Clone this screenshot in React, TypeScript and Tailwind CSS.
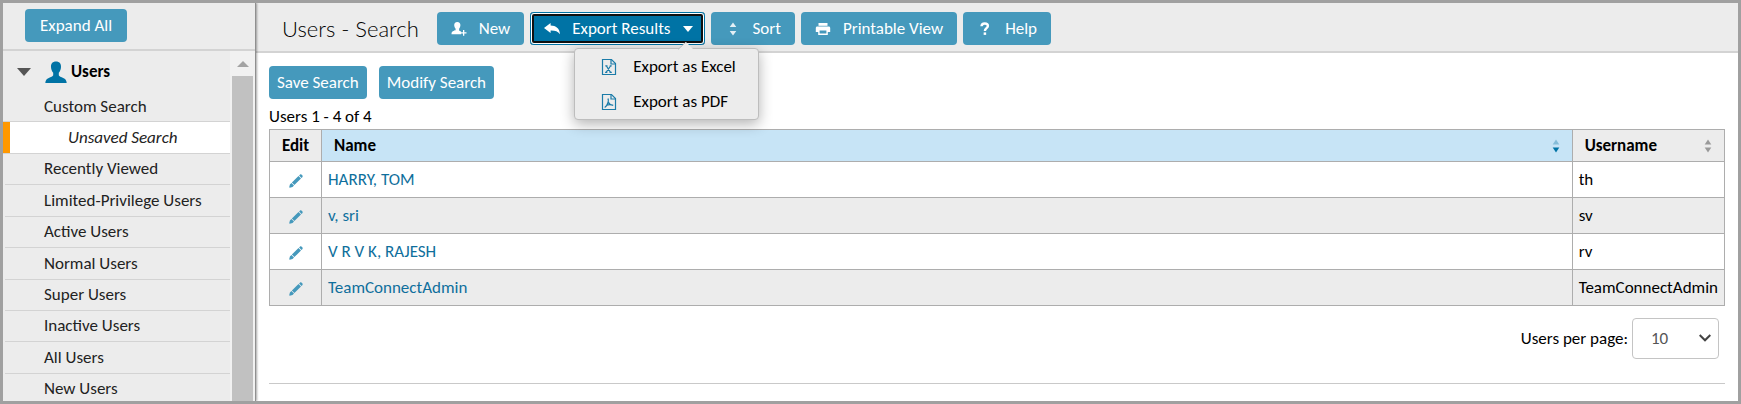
import { useState, type ReactNode } from 'react';

const SIDEBAR_VIEWS = [
  'Recently Viewed',
  'Limited-Privilege Users',
  'Active Users',
  'Normal Users',
  'Super Users',
  'Inactive Users',
  'All Users',
  'New Users',
];

const USERS = [
  { name: 'HARRY, TOM', username: 'th' },
  { name: 'v, sri', username: 'sv' },
  { name: 'V R V K, RAJESH', username: 'rv' },
  { name: 'TeamConnectAdmin', username: 'TeamConnectAdmin' },
];

function UserIcon() {
  return (
    <svg viewBox="0 0 22 22" className="h-[22px] w-[22px] fill-[#0073a5]">
      <path d="M11 0.5c3.4 0 5.2 2.2 5 5.4c-0.1 2.6-1 4.4-2.2 5.8v2.6c0.3 1.2 2.4 1.8 4.4 2.6c2.2 0.9 3.3 2.2 3.5 5.1H0.3c0.2-2.9 1.3-4.2 3.5-5.1c2-0.8 4.1-1.4 4.4-2.6v-2.6C7 10.3 6.1 8.5 6 5.9C5.8 2.7 7.6 0.5 11 0.5z" />
    </svg>
  );
}

function UserAddIcon() {
  return (
    <svg viewBox="0 0 16 16" className="h-4 w-4 fill-current">
      <path d="M6.3 1c2.1 0 3.2 1.4 3.1 3.3c-0.1 1.5-0.6 2.6-1.3 3.4v1.5c0.2 0.6 1 1 2 1.3v2.7H0.5c0-1.8 0.5-2.7 1.9-3.2c1.1-0.4 2.1-0.5 2.2-1.1V7.7C3.9 6.9 3.3 5.8 3.2 4.3C3.1 2.4 4.2 1 6.3 1z" />
      <path d="M12 9h1.3v2.2h2.2v1.3h-2.2v2.3H12v-2.3H9.8v-1.3H12z" />
    </svg>
  );
}

function ReplyIcon() {
  return (
    <svg viewBox="0 0 16 16" className="h-4 w-4 fill-current">
      <path d="M0 7L6.6 2v2.6c5.4 0.2 8.9 2.7 9.4 8.6c-2.2-3-4.8-3.9-9.4-3.8v2.7z" />
    </svg>
  );
}

function SortIcon() {
  return (
    <svg viewBox="0 0 16 16" className="h-4 w-4 fill-current opacity-85">
      <path d="M8 1.5L11.3 6h-6.6zM8 14.5L4.7 10h6.6z" />
    </svg>
  );
}

function PrinterIcon() {
  return (
    <svg viewBox="0 0 16 16" className="h-4 w-4 fill-current">
      <path d="M3.5 2h9v2.8h-9z" />
      <path
        fillRule="evenodd"
        d="M2.3 5.6h11.4c0.9 0 1.5 0.6 1.5 1.5v4h-2.4v2.9H3.2v-2.9H0.8v-4c0-0.9 0.6-1.5 1.5-1.5zM4.6 9.5v3.1h6.8V9.5z"
      />
    </svg>
  );
}

function HelpIcon() {
  return (
    <svg viewBox="0 0 16 16" className="h-4 w-4 fill-none stroke-current">
      <path d="M4.5 5.2C4.6 3.4 5.9 2.5 7.7 2.5c1.9 0 3.2 0.9 3.2 2.5c0 2.2-3 2.2-3 4.9" strokeWidth="2.4" />
      <path d="M7.9 11.4v2.5" strokeWidth="2.5" />
    </svg>
  );
}

function PencilIcon() {
  return (
    <svg viewBox="0 0 14 14" className="h-3.5 w-3.5 fill-[#4599bc]">
      <path d="M10.1 1.5l1-1c1.2-0.8 3.2 1.2 2.4 2.4l-1 1zM9.5 2l2.5 2.5L5.4 11.1L2.9 8.6zM2.4 9.1l2.6 2.5L3.5 13.1l-2.7 0.7l-0.6-0.6l0.7-2.6z" />
    </svg>
  );
}

function FileIcon({ children }: { children: ReactNode }) {
  return (
    <svg viewBox="0 0 16 18" className="h-[18px] w-4 fill-none stroke-[#1b7ba8]" strokeWidth="1.2">
      <path d="M1.5 1.5h9l4 4v11h-13z" />
      <path d="M10 1.5v4.5h4.5" />
      {children}
    </svg>
  );
}

function ColumnSort({ up, down }: { up: string; down: string }) {
  return (
    <svg viewBox="0 0 8 14" className="h-3.5 w-2">
      <path d="M4 0.5L7.3 5.5H0.7z" className={up} />
      <path d="M4 13.5L0.7 8.5h6.6z" className={down} />
    </svg>
  );
}

const buttonClass =
  'flex h-[33px] items-center rounded-sm bg-[#4599bc] text-[17px] text-white hover:bg-[#0073a5] cursor-pointer whitespace-nowrap';

function ToolbarButton({ icon, label }: { icon: ReactNode; label: string }) {
  return (
    <button type="button" className={`${buttonClass} gap-3 px-3.5`}>
      {icon}
      <span>{label}</span>
    </button>
  );
}

function Sidebar() {
  return (
    <aside className="relative z-10 flex w-[253px] shrink-0 flex-col border-r border-[#8f8f8f] bg-[#ececec] shadow-[1px_0_2px_rgba(0,0,0,0.35)]">
      <div className="border-b-2 border-[#d3d3d3] px-[22px] pt-1.5 pb-[7px]">
        <button type="button" className={`${buttonClass} px-[15px]`}>
          Expand All
        </button>
      </div>

      <div className="flex min-h-0 flex-1">
        <nav className="min-w-0 flex-1 overflow-hidden text-[17px] text-[#222]">
          <button type="button" className="flex h-[42px] w-full items-center pl-3.5 font-bold text-black">
            <svg viewBox="0 0 14 8" className="h-2 w-3.5 fill-[#555]">
              <path d="M0 0h14L7 8z" />
            </svg>
            <span className="ml-3.5">
              <UserIcon />
            </span>
            <span className="ml-1">Users</span>
          </button>
          <a href="#custom" className="flex h-7 items-center pl-[41px]">
            Custom Search
          </a>
          <a
            href="#unsaved"
            className="flex h-[33px] items-center border-y border-[#d3d3d3] bg-white bg-[linear-gradient(to_right,#ff9800_7px,transparent_7px)] pl-[65px] italic"
          >
            Unsaved Search
          </a>
          <div className="ml-0.5 grid h-[251px] auto-rows-fr">
            {SIDEBAR_VIEWS.map((view) => (
              <a key={view} href="#view" className="flex items-center border-b border-[#d3d3d3] pl-[39px]">
                {view}
              </a>
            ))}
          </div>
        </nav>

        {/* Scrollbar */}
        <div className="flex w-[25px] shrink-0 flex-col bg-[#f1f1f1] px-0.5">
          <div className="flex h-[25px] items-center justify-center">
            <svg viewBox="0 0 12 6" className="h-1.5 w-3 fill-[#a3a3a3]">
              <path d="M6 0l6 6H0z" />
            </svg>
          </div>
          <div className="flex-1 bg-[#c1c1c1]" />
        </div>
      </div>
    </aside>
  );
}

function ExportMenu() {
  const [open, setOpen] = useState(true);

  return (
    <div className="relative">
      <button
        type="button"
        aria-expanded={open}
        onClick={() => setOpen(!open)}
        className="flex h-[33px] cursor-pointer items-center gap-3 rounded-sm bg-[#0073a5] pr-3 pl-3.5 text-[17px] whitespace-nowrap text-white shadow-[inset_0_0_0_1px_#0073a5,inset_0_0_0_2px_#fff,inset_0_0_0_4px_#101010]"
      >
        <ReplyIcon />
        <span>Export Results</span>
        <svg viewBox="0 0 10 6" className="h-1.5 w-2.5 fill-current">
          <path d="M0 0h10L5 6z" />
        </svg>
      </button>

      {open && (
        <div className="absolute top-9 left-11 z-20 w-[185px] rounded border border-[#bdbdbd] bg-[#ececec] shadow-[0_4px_14px_rgba(0,0,0,0.3)]">
          <svg viewBox="0 0 16 8" className="absolute -top-[7px] right-16 h-2 w-4">
            <path d="M0 8L8 0l8 8z" className="fill-[#ececec]" />
            <path d="M0 7.5L8 0" className="stroke-[#bdbdbd]" />
          </svg>
          <button type="button" className="flex h-[35px] w-full items-center gap-4 pl-[26px] text-[17px] text-black">
            <FileIcon>
              <path d="M5.4 8l4 6.2M9.5 8l-4.2 6.2M4.3 7.9h2.2M8.7 7.9h2M4.1 14.3h2.2M8.5 14.3h2.3" />
            </FileIcon>
            Export as Excel
          </button>
          <button type="button" className="flex h-[35px] w-full items-center gap-4 pl-[26px] text-[17px] text-black">
            <FileIcon>
              <path d="M6.8 5.5c0.9 1 0.7 2.3 0.3 3.7c-0.6 2.2-1.8 4.4-3.4 5.3M7.2 9c0.8 1.8 2.6 3.1 5 3.4M5.6 12.2c2-0.7 4.4-0.7 6.6 0.1" />
            </FileIcon>
            Export as PDF
          </button>
        </div>
      )}
    </div>
  );
}

function UsersTable() {
  return (
    <table className="w-full border-collapse text-left text-[17px] leading-6 text-black">
      <thead>
        <tr className="h-8">
          <th className="w-[52px] border border-[#adadad] bg-[#ececec] text-center">Edit</th>
          <th className="border border-[#adadad] bg-[#c7e4f6] px-3">
            <div className="flex items-center justify-between">
              Name
              <ColumnSort up="fill-[#85bcd8]" down="fill-[#0073a5]" />
            </div>
          </th>
          <th className="w-[152px] border border-[#adadad] bg-[#ececec] px-3">
            <div className="flex items-center justify-between">
              Username
              <ColumnSort up="fill-[#999]" down="fill-[#999]" />
            </div>
          </th>
        </tr>
      </thead>
      <tbody>
        {USERS.map((user) => (
          <tr key={user.username} className="h-9 even:bg-[#ececec]">
            <td className="border border-[#adadad]">
              <a href="#edit" aria-label={`Edit ${user.name}`} className="flex justify-center pt-0.5">
                <PencilIcon />
              </a>
            </td>
            <td className="border border-[#adadad] px-1.5">
              <a href="#user" className="text-[#0f6f9c] hover:underline">
                {user.name}
              </a>
            </td>
            <td className="border border-[#adadad] px-1.5">{user.username}</td>
          </tr>
        ))}
      </tbody>
    </table>
  );
}

export default function App() {
  return (
    <div className="flex h-screen overflow-hidden border-[3px] border-[#a0a0a0] bg-white font-['Carlito','Lato',sans-serif]">
      <Sidebar />

      <main className="min-w-0 flex-1">
        <header className="flex items-center gap-1.5 border-b-2 border-[#d3d3d3] bg-[#ececec] pt-[9px] pb-1.5 pl-[26px]">
          <h1 className="mr-3 font-['Lato',sans-serif] text-[22px] leading-8 font-light whitespace-nowrap text-black">
            Users - Search
          </h1>
          <ToolbarButton icon={<UserAddIcon />} label="New" />
          <ExportMenu />
          <ToolbarButton icon={<SortIcon />} label="Sort" />
          <ToolbarButton icon={<PrinterIcon />} label="Printable View" />
          <ToolbarButton icon={<HelpIcon />} label="Help" />
        </header>

        <div className="px-[13px] pt-[13px]">
          <div className="flex gap-3">
            <button type="button" className={`${buttonClass} px-2`}>
              Save Search
            </button>
            <button type="button" className={`${buttonClass} px-2`}>
              Modify Search
            </button>
          </div>

          <p className="mt-1.5 text-[17px] leading-6 text-black">Users 1 - 4 of 4</p>
          <UsersTable />

          <div className="mt-3 flex items-center justify-end gap-1 pr-1.5 text-[17px] text-black">
            <label htmlFor="per-page">Users per page:</label>
            <div className="relative">
              <select
                id="per-page"
                defaultValue="10"
                className="h-[41px] w-[87px] appearance-none rounded border border-[#c4c4c4] bg-white pl-[18px] text-[17px] text-[#555]"
              >
                <option>10</option>
                <option>25</option>
                <option>50</option>
              </select>
              <svg
                viewBox="0 0 12 8"
                className="pointer-events-none absolute top-4 right-2 h-2 w-3 fill-none stroke-[#444]"
                strokeWidth="2"
              >
                <path d="M0.7 1L6 6.3L11.3 1" />
              </svg>
            </div>
          </div>

          <hr className="mt-6 border-[#c9c9c9]" />
        </div>
      </main>
    </div>
  );
}
